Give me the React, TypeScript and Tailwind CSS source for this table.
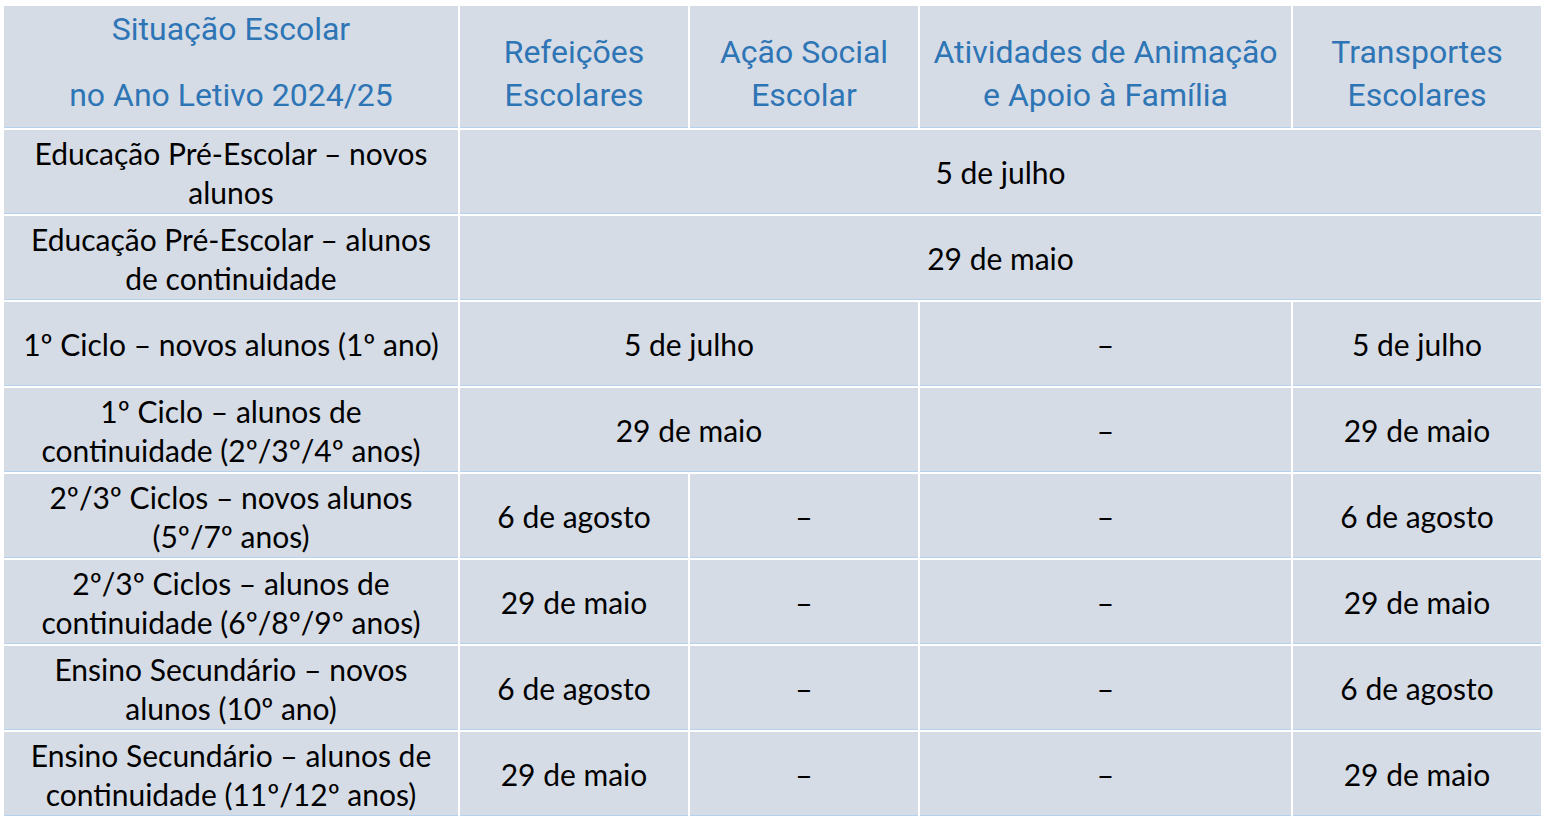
import React from "react"

type Cell = { text: React.ReactNode; span?: number }

const rows: Cell[][] = [
  [{ text: <>Educação Pré-Escolar – novos<br />alunos</> }, { text: "5 de julho", span: 4 }],
  [{ text: <>Educação Pré-Escolar – alunos<br />de continuidade</> }, { text: "29 de maio", span: 4 }],
  [{ text: "1º Ciclo – novos alunos (1º ano)" }, { text: "5 de julho", span: 2 }, { text: "–" }, { text: "5 de julho" }],
  [
    { text: <>1º Ciclo – alunos de<br />continuidade (2º/3º/4º anos)</> },
    { text: "29 de maio", span: 2 },
    { text: "–" },
    { text: "29 de maio" },
  ],
  [
    { text: <>2º/3º Ciclos – novos alunos<br />(5º/7º anos)</> },
    { text: "6 de agosto" },
    { text: "–" },
    { text: "–" },
    { text: "6 de agosto" },
  ],
  [
    { text: <>2º/3º Ciclos – alunos de<br />continuidade (6º/8º/9º anos)</> },
    { text: "29 de maio" },
    { text: "–" },
    { text: "–" },
    { text: "29 de maio" },
  ],
  [
    { text: <>Ensino Secundário – novos<br />alunos (10º ano)</> },
    { text: "6 de agosto" },
    { text: "–" },
    { text: "–" },
    { text: "6 de agosto" },
  ],
  [
    { text: <>Ensino Secundário – alunos de<br />continuidade (11º/12º anos)</> },
    { text: "29 de maio" },
    { text: "–" },
    { text: "–" },
    { text: "29 de maio" },
  ],
]

const spanClass: Record<number, string> = {
  1: "col-span-1",
  2: "col-span-2",
  4: "col-span-4",
}

const headers = [
  ["Refeições", "Escolares"],
  ["Ação Social", "Escolar"],
  ["Atividades de Animação", "e Apoio à Família"],
  ["Transportes", "Escolares"],
]

const headCell =
  "bg-[#d6dce5] border-b border-[#b4d2ee] flex flex-col items-center justify-end pb-[10px] text-[#2e75b6] text-[32px] leading-[43px] font-['Roboto',sans-serif] whitespace-nowrap"

export default function App() {
  return (
    <div className="w-[1544px] h-[822px] bg-white pt-[6px] pl-[4px]">
      <div className="grid grid-cols-[454px_228px_228px_371px_248px] grid-rows-[122px_repeat(8,84px)] gap-[2px]">
        <div className={headCell}>
          <div className="mb-[23px]">Situação Escolar</div>
          <div>no Ano Letivo 2024/25</div>
        </div>
        {headers.map((h, i) => (
          <div key={i} className={headCell}>
            <div>{h[0]}</div>
            <div>{h[1]}</div>
          </div>
        ))}

        {rows.map((r, ri) =>
          r.map((c, ci) => (
            <div
              key={`${ri}-${ci}`}
              className={`${spanClass[c.span ?? 1]} bg-[#d6dce5] border-b border-[#b4d2ee] flex items-center justify-center text-center text-black text-[30px] leading-[39px] font-['Lato',sans-serif] whitespace-nowrap pt-[2px]`}
            >
              <div>{c.text}</div>
            </div>
          ))
        )}
      </div>
    </div>
  )
}
